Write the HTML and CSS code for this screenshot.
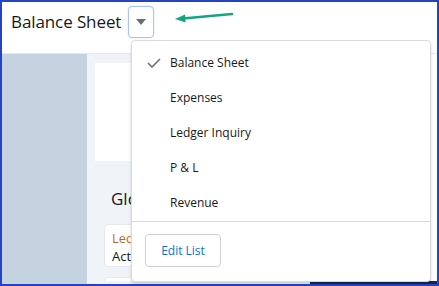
FILE: index.html
```html
<!DOCTYPE html>
<html>
<head>
<meta charset="utf-8">
<link rel="stylesheet" href="styles.css">
</head>
<body>
<div class="frame">
  <div class="header">
    <span class="title">Balance Sheet</span>
    <button class="caret-btn" aria-label="Select list">
      <svg width="10" height="6" viewBox="0 0 10 6"><path d="M0 0 H10 L5 6 Z" fill="#706e6b"/></svg>
    </button>
  </div>
  <div class="body">
    <div class="left-panel"></div>
    <div class="content">
      <div class="content-row">
        <div class="main">
          <div class="card-top"></div>
          <div class="heading"><span class="clip">Glo</span></div>
          <div class="card-row">
            <div class="link"><span class="clip">Led</span></div>
            <div class="sub"><span class="clip">Act</span></div>
          </div>
          <div class="card-next"></div>
        </div>
        <div class="right-strip"></div>
      </div>
      <div class="footer-band"></div>
    </div>
  </div>

  <svg class="annotation" width="60" height="14" viewBox="0 0 60 14">
    <path d="M8 8.5 L57 4" stroke="#13a584" stroke-width="2.6" stroke-linecap="round" fill="none"/>
    <path d="M0 9 L10 4.5 L10.5 12.5 Z" fill="#13a584"/>
  </svg>

  <div class="dropdown">
    <ul class="items">
      <li class="item selected">
        <svg class="check" width="14" height="10" viewBox="0 0 14 10"><path d="M1 5 L5 9 L13 1" stroke="#706e6b" stroke-width="1.6" fill="none"/></svg>
        <span>Balance Sheet</span>
      </li>
      <li class="item"><span>Expenses</span></li>
      <li class="item"><span>Ledger Inquiry</span></li>
      <li class="item"><span>P &amp; L</span></li>
      <li class="item"><span>Revenue</span></li>
    </ul>
    <div class="footer">
      <button class="edit-btn">Edit List</button>
    </div>
  </div>
</div>
</body>
</html>
```

FILE: styles.css
```css
* { box-sizing: border-box; }
html, body { margin: 0; padding: 0; }
body {
  width: 439px;
  height: 286px;
  overflow: hidden;
  font-family: "Open Sans", "Noto Sans", sans-serif;
  color: #080707;
  background: #fff;
}
.frame {
  position: relative;
  width: 439px;
  height: 286px;
  border: 2px solid #2444c6;
  display: flex;
  flex-direction: column;
}
.header {
  height: 52px;
  flex: none;
  background: #fff;
  border-bottom: 1px solid #e6e9ee;
  display: flex;
  align-items: flex-start;
  padding: 4px 0 0 9px;
  gap: 7px;
}
.title {
  font-size: 17px;
  line-height: 32px;
  color: #181818;
  letter-spacing: -0.1px;
}
.caret-btn {
  width: 26px;
  height: 32px;
  border: 1px solid #a6c6ef;
  border-radius: 4px;
  background: #fff;
  box-shadow: 0 0 2px #cfe0f6;
  display: flex;
  align-items: center;
  justify-content: center;
  padding: 0;
  margin: 0;
}
.body {
  flex: 1;
  display: flex;
  min-height: 0;
}
.left-panel {
  width: 85px;
  flex: none;
  background: #c5d2df;
}
.content {
  flex: 1;
  display: flex;
  flex-direction: column;
  background: #f0f4f9;
}
.content-row {
  flex: 1;
  display: flex;
  min-height: 0;
}
.main {
  flex: 1;
  padding: 9px 0 0 8px;
  display: flex;
  flex-direction: column;
  overflow: hidden;
}
.card-top {
  height: 98px;
  background: #fff;
  flex: none;
}
.clip {
  display: block;
  width: 20px;
  overflow: hidden;
  white-space: nowrap;
}
.heading {
  font-size: 17px;
  line-height: 24px;
  margin: 26px 0 0 16px;
  color: #181818;
  white-space: nowrap;
}
.card-row {
  margin: 13px 0 0 9px;
  height: 43px;
  background: #fff;
  border: 1px solid #e5e9ef;
  border-radius: 4px;
  padding: 4px 0 0 7px;
  font-size: 13px;
  line-height: 18px;
  white-space: nowrap;
  flex: none;
}
.link { color: #c0692e; }
.sub { color: #181818; }
.card-next {
  margin: 10px 0 0 9px;
  height: 20px;
  background: #fff;
  border: 1px solid #e5e9ef;
  border-radius: 4px;
  flex: none;
}
.right-strip {
  width: 6px;
  flex: none;
  background: #fff;
}
.footer-band {
  height: 3px;
  width: 127px;
  align-self: flex-end;
  background: #17264d;
  flex: none;
}
.annotation {
  position: absolute;
  left: 173px;
  top: 8px;
}
.dropdown {
  position: absolute;
  left: 129px;
  top: 38px;
  width: 300px;
  height: 242px;
  background: #fff;
  border: 1px solid #dddbda;
  border-radius: 4px;
  box-shadow: 0 2px 3px rgba(0,0,0,0.16);
  display: flex;
  flex-direction: column;
}
.items {
  list-style: none;
  margin: 0;
  padding: 4px 0 0 0;
}
.item {
  height: 35px;
  display: flex;
  align-items: center;
  padding-left: 38px;
  position: relative;
  font-size: 12px;
  color: #181818;
}
.check {
  position: absolute;
  left: 15px;
  top: 13px;
}
.footer {
  margin-top: 1px;
  border-top: 1px solid #d8d8d8;
  padding: 12px 0 0 13px;
}
.edit-btn {
  width: 76px;
  height: 33px;
  border: 1px solid #d0d0d0;
  border-radius: 4px;
  background: #fff;
  font-family: "Open Sans", "Noto Sans", sans-serif;
  font-size: 12px;
  color: #0b74d6;
  padding: 0;
}
```
